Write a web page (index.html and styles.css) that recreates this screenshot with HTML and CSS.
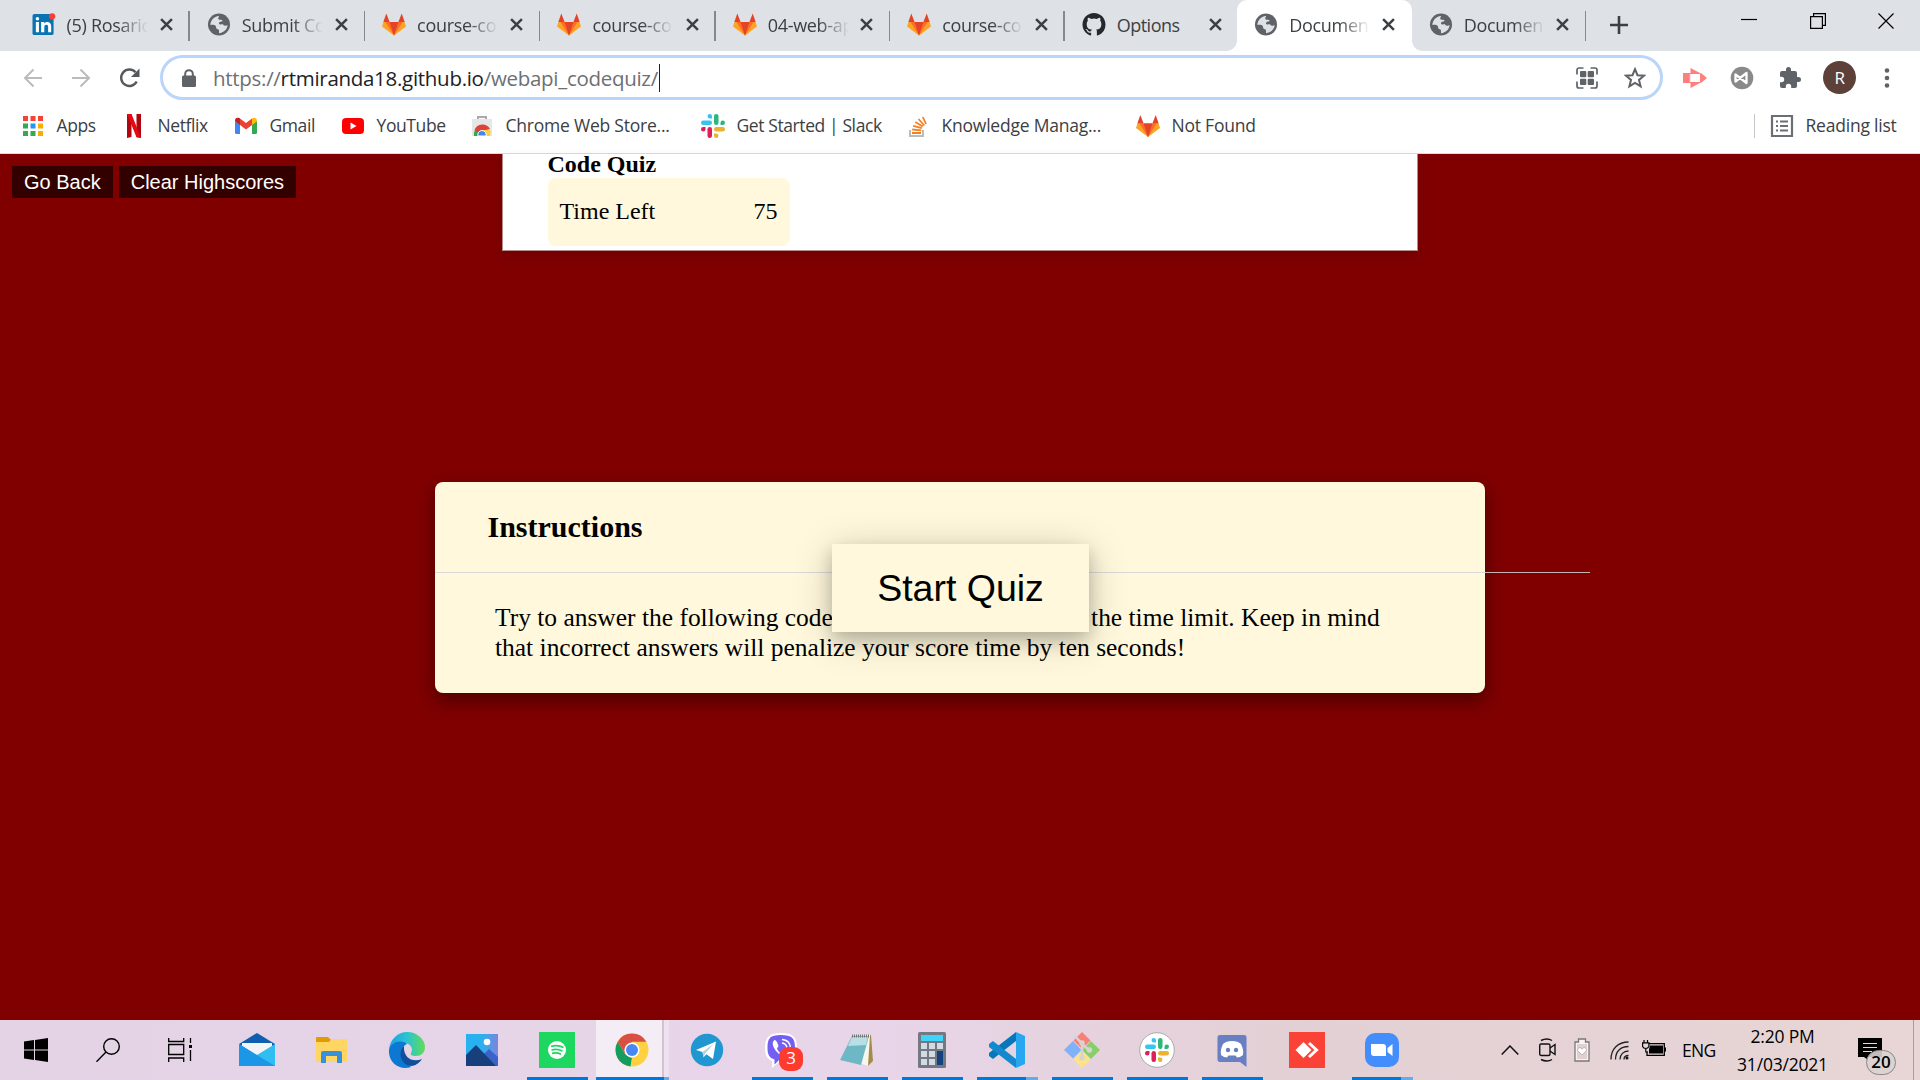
FILE: index.html
```html
<!DOCTYPE html>
<html lang="en">
<head>
<meta charset="utf-8">
<title>Code Quiz</title>
<link rel="stylesheet" href="styles.css">
</head>
<body>
<svg class="defs" aria-hidden="true">
  <symbol id="globe" viewBox="0 0 24 24"><circle cx="12" cy="12" r="11.500" fill="#5f6368"/><path d="M12 3C6.500 3.500 3 8 3 12.500c2-.3 4.500-.2 5.500 1 .9 1 0 2.500 1.500 3.200 1.200.6 2 .4 2 2V21c5-.3 8.700-4 9-8.500-1.300 1.300-3.600 1-4.500-.3-.8-1.200-3 .6-4.200-.8-1.200-1.500.9-2.500 2.400-2.500 1 0 1.300-1 .4-1.500-1.200-.6-3.500.3-3.900-1.300C11 5 12 4.300 12 3z" fill="#dee1e6"/></symbol>
  <symbol id="gitlab" viewBox="0 0 24 22"><path d="M12 22 0 13l1.500-4.500h21L24 13z" fill="#fca326"/><path d="M12 22 3.500 8.500h17z" fill="#fc6d26"/><path d="M12 22 7.600 8.500h8.800z" fill="#e24329"/><path d="M1.300 8.500 4.300 0l3.300 8.500zM16.400 8.500 19.700 0l3 8.500z" fill="#e24329"/></symbol>
  <symbol id="x" viewBox="0 0 12 12"><path d="m1 1 10 10M11 1 1 11" stroke="#3c4043" stroke-width="2.300"/></symbol>
  <symbol id="slack" viewBox="0 0 24 24"><g fill="#36c5f0"><rect x="0" y="6.500" width="11" height="4.500" rx="2.250"/><path d="M11 4.500H8.700A2.250 2.250 0 1 1 11 2.250z"/></g><g fill="#2eb67d"><rect x="13" y="0" width="4.500" height="11" rx="2.250"/><path d="M19.500 11V8.700A2.250 2.250 0 1 1 21.750 11z"/></g><g fill="#ecb22e"><rect x="13" y="13" width="11" height="4.500" rx="2.250"/><path d="M13 19.500h2.300A2.250 2.250 0 1 1 13 21.750z"/></g><g fill="#e01e5a"><rect x="6.500" y="13" width="4.500" height="11" rx="2.250"/><path d="M4.500 13v2.300A2.250 2.250 0 1 1 2.250 13z"/></g></symbol>
</svg>

<header class="browser">
  <div class="tabstrip">
    <div class="tab wide"><svg class="fav" viewBox="0 0 24 24"><rect x="0" y="1" width="22" height="22" rx="2" fill="#0a74b3"/><path d="M3.500 9.500h3.200V20H3.500zM9 9.500h3.200V11c1.500-2.500 7.300-2.300 7.300 2.600V20h-3.200v-5.700c0-2.800-4-2.500-4 .2V20H9z" fill="#fff"/><circle cx="5.100" cy="6" r="1.800" fill="#fff"/><circle cx="20.500" cy="3.500" r="3.300" fill="#f44336"/></svg><span>(5) Rosario</span><svg class="close"><use href="#x"/></svg></div>
    <div class="tab wide"><svg class="fav"><use href="#globe"/></svg><span>Submit Course</span><svg class="close"><use href="#x"/></svg></div>
    <div class="tab wide"><svg class="fav"><use href="#gitlab"/></svg><span>course-content</span><svg class="close"><use href="#x"/></svg></div>
    <div class="tab wide"><svg class="fav"><use href="#gitlab"/></svg><span>course-content</span><svg class="close"><use href="#x"/></svg></div>
    <div class="tab"><svg class="fav"><use href="#gitlab"/></svg><span>04-web-apis</span><svg class="close"><use href="#x"/></svg></div>
    <div class="tab"><svg class="fav"><use href="#gitlab"/></svg><span>course-content</span><svg class="close"><use href="#x"/></svg></div>
    <div class="tab no-line"><svg class="fav" viewBox="0 0 16 16"><path fill="#24292e" d="M8 0C3.580 0 0 3.580 0 8c0 3.540 2.290 6.530 5.470 7.590.4.070.55-.17.55-.38 0-.19-.01-.82-.01-1.490-2.010.37-2.530-.49-2.690-.94-.09-.23-.48-.94-.82-1.130-.28-.15-.68-.52-.01-.53.63-.01 1.080.58 1.230.82.72 1.210 1.870.87 2.330.66.070-.52.28-.87.51-1.070-1.780-.2-3.640-.89-3.640-3.950 0-.87.31-1.590.82-2.150-.08-.2-.36-1.020.08-2.120 0 0 .67-.21 2.200.82a7.600 7.600 0 0 1 4 0c1.530-1.040 2.200-.82 2.200-.82.44 1.100.16 1.920.08 2.120.51.56.82 1.270.82 2.150 0 3.070-1.870 3.750-3.650 3.950.29.25.54.73.54 1.480 0 1.070-.01 1.930-.01 2.200 0 .21.15.46.55.38A8.010 8.010 0 0 0 16 8c0-4.420-3.580-8-8-8z"/></svg><span class="full">Options</span><svg class="close"><use href="#x"/></svg></div>
    <div class="tab active"><svg class="fav"><use href="#globe"/></svg><span>Document</span><svg class="close"><use href="#x"/></svg></div>
    <div class="tab"><svg class="fav"><use href="#globe"/></svg><span>Document</span><svg class="close"><use href="#x"/></svg></div>
    <svg class="newtab" viewBox="0 0 18 18"><path d="M9 0v18M0 9h18" stroke="#3c4043" stroke-width="2.600"/></svg>
    <div class="winctl">
      <svg viewBox="0 0 16 16"><path d="M0 6.500h16" stroke="#000" stroke-width="1.200"/></svg>
      <svg viewBox="0 0 16 16"><path d="M.6 3.600h11.800v11.800H.6zM3.600 3.600v-3h11.800v11.800h-3" fill="none" stroke="#000" stroke-width="1.200"/></svg>
      <svg viewBox="0 0 16 16"><path d="m.5.5 15 15m0-15-15 15" stroke="#000" stroke-width="1.200"/></svg>
    </div>
  </div>

  <div class="toolbar">
    <svg class="nav" viewBox="0 0 20 20"><path d="M19 10H2m8.500-8.500L2 10l8.500 8.500" fill="none" stroke="#b9bbbe" stroke-width="2"/></svg>
    <svg class="nav" viewBox="0 0 20 20"><path d="M1 10h17M9.500 1.500 18 10l-8.500 8.500" fill="none" stroke="#b9bbbe" stroke-width="2"/></svg>
    <svg class="nav" viewBox="0 0 20 20"><path d="M17.200 13.500A8.200 8.200 0 1 1 16 4.300" fill="none" stroke="#55595e" stroke-width="2.400"/><path d="M20 .5V9h-8.500z" fill="#55595e"/></svg>
    <div class="omnibox">
      <svg class="lock" viewBox="0 0 14 18"><path d="M3.200 8V5a3.800 3.800 0 0 1 7.600 0v3" fill="none" stroke="#5f6368" stroke-width="2"/><rect y="6.500" width="14" height="11.500" rx="1.500" fill="#5f6368"/></svg>
      <div class="url">https://<b>rtmiranda18.github.io</b>/webapi_codequiz/</div>
      <i class="caret"></i>
      <svg class="qr" viewBox="0 0 22 22"><path d="M1 7.500V3a2 2 0 0 1 2-2h4.500M14.500 1H19a2 2 0 0 1 2 2v4.500M21 14.500V19a2 2 0 0 1-2 2h-4.500M7.500 21H3a2 2 0 0 1-2-2v-4.500" fill="none" stroke="#5f6368" stroke-width="1.700"/><g fill="#5f6368"><rect x="4" y="4" width="6.300" height="6.300" rx="1"/><rect x="11.700" y="4" width="6.300" height="6.300" rx="1"/><rect x="4" y="11.700" width="6.300" height="6.300" rx="1"/><rect x="11.700" y="11.700" width="6.300" height="6.300" rx="1"/></g></svg>
      <svg class="star" viewBox="0 0 22 22"><path d="m11 2.200 2.500 6 6.500.5-5 4.200 1.600 6.400L11 15.900l-5.600 3.400L7 12.900 2 8.700l6.500-.5z" fill="none" stroke="#5f6368" stroke-width="2"/></svg>
    </div>
    <div class="exts">
      <svg viewBox="0 0 24 24"><path d="M0 7h6v10H0zM7.500 2l9.500 5H7.500zM18 7l6 5-6 5v-3.500h-1v-3h1zM7.500 22v-5H17z" fill="#ff7f7c"/><path d="M6.700 7v10M6 7.500h11.500V11M6 16.500h11.500V13" fill="none" stroke="#ff7f7c"/></svg>
      <svg viewBox="0 0 24 24"><circle cx="12" cy="12" r="11.300" fill="#8a8a8a"/><path d="M5.500 8.500v7L16.500 7v10z" fill="none" stroke="#fff" stroke-width="2.300" stroke-linejoin="round"/></svg>
      <svg viewBox="0 0 24 24"><path d="M20.500 11H19V7a2 2 0 0 0-2-2h-4V3.500a2.500 2.500 0 0 0-5 0V5H4a2 2 0 0 0-2 2v3.800h1.500a2.700 2.700 0 0 1 0 5.400H2V20a2 2 0 0 0 2 2h3.800v-1.500a2.700 2.700 0 0 1 5.400 0V22H17a2 2 0 0 0 2-2v-4h1.500a2.500 2.500 0 0 0 0-5z" fill="#5f6368"/></svg>
      <div class="avatar">R</div>
      <svg viewBox="0 0 24 24"><g fill="#5f6368"><circle cx="12" cy="4.500" r="2.300"/><circle cx="12" cy="12" r="2.300"/><circle cx="12" cy="19.500" r="2.300"/></g></svg>
    </div>
  </div>

  <nav class="bookmarks">
    <a><svg viewBox="0 0 24 24"><path d="M2 2h5v5H2zM9.500 2h5v5h-5zM17 2h5v5h-5z" fill="#f44336"/><path d="M2 9.500h5v5H2zM2 17h5v5H2zM9.500 17h5v5h-5z" fill="#34a853"/><path d="M9.500 9.500h5v5h-5z" fill="#2196f3"/><path d="M17 9.500h5v5h-5zM17 17h5v5h-5z" fill="#fbac04"/></svg><span>Apps</span></a>
    <a><svg viewBox="0 0 24 24"><path d="M5 0h4.500v23L5 24zM14.500 0H19v24l-4.500-1z" fill="#b1060f"/><path d="M5 0h4.500L19 24l-4.500-.8z" fill="#e50914"/></svg><span>Netflix</span></a>
    <a><svg viewBox="0 0 24 24"><path d="M1 7l5 3.500V20H2.500A1.500 1.500 0 0 1 1 18.500z" fill="#4285f4"/><path d="M23 7l-5 3.500V20h3.500a1.500 1.500 0 0 0 1.500-1.500z" fill="#34a853"/><path d="M1 7c0-3 3-4 5-2.500L12 9l6-4.500V11l-6 4.500L6 11z" fill="#ea4335"/><path d="M18 11V4.500C20 3 23 4 23 7z" fill="#fbbc04"/><path d="M1 7c0-3 3-4 5-2.500V11z" fill="#c5221f"/></svg><span>Gmail</span></a>
    <a><svg viewBox="0 0 24 24"><rect x="1" y="4" width="22" height="16" rx="4" fill="#f00"/><path d="m9.500 8.500 6 3.500-6 3.500z" fill="#fff"/></svg><span>YouTube</span></a>
    <a><svg viewBox="0 0 24 24"><path d="M8 5V3h8v2" fill="none" stroke="#aaa" stroke-width="2"/><path d="M2 5h20v17H2z" fill="#e6e6e6"/><path d="M4 22a8 9 0 0 1 4-9l4 9z" fill="#34a853"/><path d="M4.500 16a8.500 8.500 0 0 1 15.500-1l-8 2-4 1z" fill="#db4437"/><path d="M12 16h8.200c.5 2 .3 4-.2 6h-8z" fill="#ffcd40"/><path d="M8 22a4.200 4.200 0 1 1 8 0z" fill="#4285f4" stroke="#fff"/></svg><span class="fit">Chrome Web Store...</span></a>
    <a><svg><use href="#slack"/></svg><span>Get Started | Slack</span></a>
    <a><svg viewBox="0 0 24 24"><path d="M4 16v6h13v-6" fill="none" stroke="#bcbbbb" stroke-width="2"/><path d="M6 19h9M6.200 15.500l9 .9M7.200 11.800l8.600 2.400M9.300 8l7.500 4.600M12.500 5l5.800 6.500M16.800 3l3.200 7" stroke="#f48024" stroke-width="1.800"/></svg><span class="fit">Knowledge Manag...</span></a>
    <a><svg><use href="#gitlab"/></svg><span class="fit">Not Found</span></a>
    <a class="reading"><svg viewBox="0 0 24 24"><path d="M2 2h20v20H2z" fill="none" stroke="#6b6e72" stroke-width="2.200"/><path d="M6 7.500h2m2 0h8M6 12h2m2 0h8m-12 4.500h2m2 0h8" stroke="#6b6e72" stroke-width="2"/></svg><span class="fit">Reading list</span></a>
  </nav>
</header>

<main class="page">
  <div class="top">
    <div class="actions"><button>Go Back</button><button>Clear Highscores</button></div>
    <section class="scorebar">
      <h1>Code Quiz</h1>
      <div class="timer"><span>Time Left</span><span>75</span></div>
    </section>
  </div>
  <section class="card">
    <h2>Instructions</h2>
    <div class="rule"></div>
    <p>Try to answer the following code-related questions within the time limit. Keep in mind<br>that incorrect answers will penalize your score time by ten seconds!</p>
    <button class="start">Start Quiz</button>
  </section>
</main>

<footer class="taskbar">
  <div class="system">
    <svg viewBox="0 0 24 24"><path d="m0 3.500 10-1.400v9.400H0zM11 2l13-2v11.500H11zM0 12.500h10v9.400l-10-1.400zM11 12.500h13V24l-13-2z"/></svg>
    <svg viewBox="0 0 24 24" fill="none" stroke="#000" stroke-width="1.400"><circle cx="15.500" cy="8.500" r="7.800"/><path d="M10 14 .5 23.800"/></svg>
    <svg viewBox="0 0 24 24" fill="none" stroke="#000" stroke-width="1.300"><path d="M.7 0v3.500h15V0M.7 6.500h15v10H.7zM.7 24v-4h15v4M22.500 0v5M22.500 12v11"/><path d="M21 7h3v3h-3z" fill="#000" stroke="none"/></svg>
  </div>
  <div class="apps">
    <div><svg viewBox="0 0 36 36"><path d="M0 12 18 1l18 11v5H0z" fill="#0f5fae"/><path d="M3 11h30v9L18 25 3 20z" fill="#f4f4f4"/><path d="M0 12v22h36V12L18 23z" fill="#30bdf2"/><path d="m0 12 36 22H0z" fill="#1b97e5"/></svg></div>
    <div><svg viewBox="0 0 36 36"><path d="M2 6q0-1 1-1h11l3 3-3 3H2z" fill="#e29c00"/><path d="M2 10h13l3-3h15v22q0 1-1 1H3q-1 0-1-1z" fill="#ffd563"/><path d="M7 31V21q0-2 2-2h17q2 0 2 2v10h-5v-7H12v7z" fill="#3790db"/></svg></div>
    <div><svg viewBox="0 0 36 36"><defs><linearGradient id="eg"><stop stop-color="#1c9fe0"/><stop offset=".5" stop-color="#2cc3d2"/><stop offset="1" stop-color="#62db55"/></linearGradient></defs><path d="M0 18C1 7 9 0 18 0c11 0 18 8 18 15 0 6-4 9-9 9-4 0-6-1-5-3 3-5-1-10-8-10C7 11 2 14 0 18z" fill="url(#eg)"/><path d="M0 18C2 10 12 7 18 12c-6 2-7 12 0 18l4 5C10 39-1 30 0 18z" fill="#0c78d4"/><path d="M15 14c-7 6-3 20 8 20 5-1 8-4 10-7-9 4-19-1-18-13z" fill="#114f9b"/></svg></div>
    <div><svg viewBox="0 0 36 36"><defs><linearGradient id="ph"><stop offset=".5" stop-color="#29b0ee"/><stop offset="1" stop-color="#7e83dc"/></linearGradient></defs><path d="M2 2h32v32H2z" fill="url(#ph)"/><path d="m17 25 8-8 9 8v9H18z" fill="#3b62c9"/><path d="M2 23 12 13l20 21H2z" fill="#173f7c"/><circle cx="23" cy="10" r="3.300" fill="#fff"/></svg></div>
    <div class="open"><svg viewBox="0 0 36 36"><path d="M0 0h36v36H0z" fill="#1ed760"/><circle cx="18" cy="18" r="9" fill="#fff"/><path d="M12 14.500q6.500-2 12.500 1M12.500 18q5.500-1.500 11 1M13 21.300q5-1 9 1" fill="none" stroke="#1ed760" stroke-width="1.700"/></svg></div>
    <div class="open current multi"><svg viewBox="0 0 36 36"><circle cx="18" cy="18" r="16.500" fill="#ffd140"/><path d="M3.700 9.800A16.500 16.500 0 0 1 32.300 9.800H18l-7 12z" fill="#d94f43"/><path d="M3.700 9.800 11 22l7 4.200-1.500 8.300A16.500 16.500 0 0 1 3.700 9.800z" fill="#179c5f"/><path d="m16.700 34.500 8.400-12.300-7 3.500z" fill="#ffd140"/><circle cx="18" cy="18" r="7.600" fill="#fff"/><circle cx="18" cy="18" r="6" fill="#4788f4"/></svg></div>
    <div><svg viewBox="0 0 36 36"><circle cx="18" cy="18" r="16.200" fill="#2197d1"/><path d="m7 18 20-8.500L24 27l-6.500-4.700-3 3L13.500 20z" fill="#fff"/><path d="m13.500 20 11-8-8.500 9.500-1.500 4z" fill="#b5cfe1"/></svg></div>
    <div class="open"><svg viewBox="0 0 36 36"><path d="M17 1C5 1 1 5 1 16c0 7 2 11 7 13v7l7-6c14 0 18-3 18-14S29 1 17 1z" fill="#fff"/><path d="M17 3C6 3 3.500 6 3.500 16c0 7 2 10 7 11.500v5l5-5C27 28 31 26 31 16S28 3 17 3z" fill="#7360f2"/><path d="M10.500 8c-3 2-2 7 2.500 12s8 6 9.500 3.500c.5-1-2.500-3.500-3.500-3.500l-2 1.200c-2-1-3.500-3-4-5l1.500-2c0-1.500-2.500-6.700-4-6.200z" fill="#fff"/><path d="M18 7.500q8 .5 8.500 8.500M18 11q4.500.5 5 5" fill="none" stroke="#fff" stroke-width="1.400"/></svg><em>3</em></div>
    <div class="open"><svg viewBox="0 0 36 36"><path d="m13 4 19-1 2 26-5 5z" fill="#a58b4b"/><path d="m13 4 18-1-2 31-8-3z" fill="#f7f7ee"/><path d="M13 4h17l-8 29-21-5z" fill="#6eb8c6"/><path d="M13 5h16l-2 8-18 1z" fill="#b8dfe3"/><path d="M13 4h18" stroke="#777" stroke-width="3" stroke-dasharray="1 1"/></svg></div>
    <div class="open"><svg viewBox="0 0 36 36"><rect x="4" width="28" height="36" rx="1.500" fill="#737982"/><path d="M7 3h22v6H7z" fill="#3fd3fa"/><path d="M7 11h6v6H7zm8 0h6v6h-6zm8 0h6v6h-6zM7 19h6v6H7zm8 0h6v6h-6zM7 27h6v6H7zm8 0h6v6h-6z" fill="#d3dae3"/><path d="M23 19h6v14h-6z" fill="#12427f"/></svg></div>
    <div class="open multi"><svg viewBox="0 0 36 36"><path d="m27 9-23 18-4-3v-3L27 0z" fill="#0876bb"/><path d="M27 27 4 9l-4 3v3l27 21z" fill="#1389ce"/><path d="m27 0 9 4v28l-9 4z" fill="#27a7f0"/></svg></div>
    <div class="open"><svg viewBox="0 0 36 36"><path d="m18 0 8.500 8.500L18 17 9.500 8.500z" fill="#f88078"/><path d="m9 9 8.500 9L9 26.500 0 18z" fill="#80b2fa"/><path d="m27 9 9 9-9 9-9-9z" fill="#87d068"/><path d="m18 19 8.500 8.500L18 36l-8.500-8.500z" fill="#ffe283"/><path d="m11 4 7 8v14M18 12l7 6" stroke="#d8d3d3" stroke-width="2.500" fill="none"/><g fill="#d8d3d3"><circle cx="18" cy="11" r="2.700"/><circle cx="18" cy="26" r="2.700"/><circle cx="25.500" cy="18" r="2.700"/></g></svg></div>
    <div class="open"><svg viewBox="0 0 36 36"><circle cx="18" cy="18" r="17.300" fill="#fff" stroke="#aaa"/><use href="#slack" x="6" y="6" width="24" height="24"/></svg></div>
    <div class="open"><svg viewBox="0 0 36 36"><path d="M6 3h24q2.500 0 2.500 2.500V35L26 30H6q-2.500 0-2.500-2.500v-22Q3.500 3 6 3z" fill="#687fc4"/><path d="M12 10q6-2 12 0l3 2q3 6 2 11-3 2.500-6 2.500l-1.500-2h-7l-1.500 2q-3 0-6-2.500-1-5 2-11z" fill="#fff"/><circle cx="14" cy="18" r="2.200" fill="#687fc4"/><circle cx="22" cy="18" r="2.200" fill="#687fc4"/></svg></div>
    <div><svg viewBox="0 0 36 36"><path d="M0 0h36v36H0z" fill="#fb4237"/><path d="m14.500 10 8 8-8 8-8-8z" fill="#fff"/><path d="m20 11 7.500 7-7.500 7" fill="none" stroke="#fff" stroke-width="3"/></svg></div>
    <div class="open multi"><svg viewBox="0 0 36 36"><rect x="1" y="1" width="34" height="34" rx="10" fill="#448dfc"/><path d="M7 12h12q3 0 3 3v9H10q-3 0-3-3zM23.500 16l5-4v12l-5-4z" fill="#fff"/></svg></div>
  </div>
  <div class="tray">
    <svg class="t-up" viewBox="0 0 18 10"><path d="m.7 9.500 8.300-8.500 8.300 8.500" fill="none" stroke="#111" stroke-width="1.500"/></svg>
    <svg class="t-cam" viewBox="0 0 17 24" fill="none" stroke="#111" stroke-width="1.400"><path d="M2 2.500q6-3 11 0M2 21.500q6 3 11 0M11 10l5-3.500v10L11 13"/><rect x=".7" y="6" width="10.300" height="11.500" rx="1.500"/></svg>
    <svg class="t-heart" viewBox="0 0 16 24"><path d="M1 4h3.500V1h7v3H15v19H1z" fill="#f9f2f2" stroke="#777" stroke-width="1.300"/><path d="M3 6h10v15H3z" fill="#e3cfd0"/><path d="m8 17-4.500-4.500c0-3.500 3.500-3.500 4.500-1.300 1-2.200 4.500-2.200 4.500 1.300z" fill="#fff" stroke="#999" stroke-width=".6"/></svg>
    <svg class="t-wifi" viewBox="0 0 19 19" fill="none" stroke="#222" stroke-width="1.300"><path d="M1 18.500C1 8 8 1 18.500 1M5.500 18.500c0-8 5-13 13-13M10 18.500c0-5 3.500-8.500 8.500-8.500M14 18.500q0-4 4.500-4"/><circle cx="17" cy="17" r="1.500" fill="#111" stroke="none"/></svg>
    <svg class="t-bat" viewBox="0 0 24 17"><path d="M6 3.700h16.300v11.600H5V11" fill="none" stroke="#000" stroke-width="1.300"/><path d="M8 5.500h13v8H7v-4zM22.500 7.500H24v4h-1.500z"/><path d="M.6 2.800h6.300v3.700q-1 2-3.200 2T.6 6.500zM2 0v3M5.500 0v3M3.800 8.500V12H6" fill="#e6d5d6" stroke="#000" stroke-width="1.200"/></svg>
    <span class="lang">ENG</span>
    <div class="clock"><span>2:20 PM</span><span>31/03/2021</span></div>
    <div class="notif"><svg viewBox="0 0 24 22"><path d="M0 0h24v19H10v3l-4-3H0z"/><path d="M5 5.500h14M5 9.500h14M5 13.500h9" stroke="#e8d8d8" stroke-width="1.200"/></svg><em>20</em></div>
    <i class="peek"></i>
  </div>
</footer>
</body>
</html>
```
FILE: styles.css
```css
* { box-sizing: border-box; }
body {
  margin: 0; width: 1920px; height: 1080px; overflow: hidden;
  display: flex; flex-direction: column;
  font-family: "Open Sans", "Noto Sans", sans-serif; color: #3c4043;
}
svg { display: block; flex: none; }
.defs { display: none; }
button { border: 0; padding: 0; font-family: "Liberation Sans", Arial, sans-serif; }

/* browser chrome */
.browser { height: 154px; background: #fff; border-bottom: 1px solid #dadce0; }
.tabstrip { display: flex; align-items: center; height: 51px; padding-left: 14.500px; background: #dee1e6; }
.tab { position: relative; display: flex; align-items: center; flex: none; width: 174.500px; height: 51px; padding: 0 17px 2px 17px; }
.tab.wide { width: 175.300px; }
.tab.no-line { width: 172.500px; padding-right: 15px; }
.tab::after { content: ""; position: absolute; right: 0; top: 11px; width: 1.500px; height: 30px; background: #85888d; }
.tab.no-line::after, .tab.active::after { display: none; }
.fav { width: 24px; height: 23px; margin-right: 11px; }
.tab span {
  width: 81px; font-size: 18px; letter-spacing: -.3px; white-space: nowrap; overflow: hidden;
  -webkit-mask-image: linear-gradient(90deg, #000 62%, transparent 100%);
}
.tab span.full { -webkit-mask-image: none; letter-spacing: -.5px; }
.close { width: 13px; height: 13px; margin-left: auto; }
.tab.active { background: #fff; border-radius: 10px 10px 0 0; }
.tab.active::before {
  content: ""; position: absolute; left: -10px; right: -10px; bottom: 0; height: 10px;
  background:
    radial-gradient(circle at 0 0, transparent 9.500px, #fff 10px) left / 10px 10px no-repeat,
    radial-gradient(circle at 100% 0, transparent 9.500px, #fff 10px) right / 10px 10px no-repeat;
}
.newtab { width: 18px; height: 18px; margin: 0 0 2px 24px; }
.winctl { display: flex; gap: 52.500px; margin: 0 26px 9px auto; }
.winctl svg { width: 16px; height: 16px; }

.toolbar { display: flex; align-items: center; height: 53px; padding: 0 21px 0 23px; }
.nav { width: 20px; height: 20px; margin-right: 28px; }
.nav:nth-of-type(3) { width: 21px; margin-right: 20px; }
.omnibox { display: flex; align-items: center; flex: none; width: 1503px; height: 45px; padding: 0 14px 0 19px; border: 3px solid #b9d5fb; border-radius: 23px; }
.lock { width: 14px; height: 18px; margin-right: 17px; }
.url { width: 446px; font-size: 20.500px; letter-spacing: -.29px; white-space: nowrap; color: #6d7074; }
.url b { font-weight: 400; color: #202124; }
.caret { width: 1px; height: 28px; background: #222; }
.qr { width: 22px; height: 22px; margin-left: auto; }
.star { width: 22px; height: 22px; margin-left: 26px; }
.exts { display: flex; align-items: center; justify-content: space-between; flex: 1; margin: 0 0 0 20px; }
.exts svg { width: 24px; height: 24px; }
.exts svg:nth-child(3) { margin-left: 1px; }
.avatar { width: 33px; height: 33px; margin: 0 -1px 0 -1px; border-radius: 50%; background: #5d4037; color: #fff; font-size: 17px; line-height: 33px; text-align: center; }
.exts svg:last-child { margin: 0 0 0 -3px; }

.bookmarks {
  display: grid; grid-template-columns: 101px 112px 107px 129px 231px 205px 230px 618px auto;
  align-items: center; height: 43px; padding-left: 21px;
}
.bookmarks a { display: flex; align-items: center; gap: 12px; height: 24px; }
.bookmarks svg { width: 24px; height: 24px; }
.bookmarks span { margin: -2px 0 0 -.5px; font-size: 17.500px; letter-spacing: -.4px; white-space: nowrap; }
.bookmarks span.fit { letter-spacing: -.22px; }
.bookmarks .reading { padding-left: 15px; border-left: 1px solid #c4c7cb; }

/* quiz page */
.page { height: 866px; background: #800000; font-family: "Liberation Serif", "Times New Roman", serif; color: #000; }
.top { display: flex; height: 97px; }
.actions { display: flex; gap: 6px; width: 502px; padding: 12px 0 0 12px; }
.actions button { height: 32px; padding: 0 12px; background: #330000; color: #fff; font-size: 20px; }
.scorebar { width: 916px; height: 97px; padding-left: 44.500px; background: #fff; border: 1px solid #b58d8d; border-top: 0; box-shadow: 0 5px 12px rgba(0,0,0,.12); }
.scorebar h1 { margin: 0; height: 23.500px; font-size: 24px; line-height: 20px; }
.timer { display: flex; justify-content: space-between; align-items: center; width: 242px; height: 68px; padding: 0 12px; border-radius: 8px; background: #fff8dc; font-size: 24px; }
.card { position: relative; width: 1050px; height: 211px; margin: 231px auto 0; background: #fff8dc; border-radius: 8px; box-shadow: 0 10px 20px rgba(0,0,0,.22), 0 5px 18px rgba(0,0,0,.24); }
.card h2 { margin: 0; height: 90px; padding: 28px 52.500px 0; font-size: 30px; line-height: 34px; }
.rule { width: 1155px; height: 1px; background: rgba(211,211,211,.85); }
.card p { margin: 0; padding: 29.500px 0 0 60px; font-size: 25.480px; line-height: 30px; white-space: nowrap; }
.start { position: absolute; left: 397px; top: 62px; width: 257px; height: 88px; background: #fff8dc; color: #000; font-size: 37.500px; box-shadow: 0 8px 16px rgba(0,0,0,.2), 0 6px 40px rgba(0,0,0,.19); }

/* taskbar */
.taskbar { display: flex; height: 60px; background: linear-gradient(90deg, #e3d3e5, #e8d5e9 45%, #e3d0d4 68%, #e8d6d6); color: #000; }
.system { display: flex; align-items: center; gap: 48px; width: 219.500px; padding-left: 24px; }
.system svg { width: 24px; height: 24px; }
.apps { display: flex; }
.apps div { position: relative; display: flex; justify-content: center; align-items: center; width: 75px; height: 60px; }
.apps svg { width: 36px; height: 36px; }
.apps .open::after { content: ""; position: absolute; left: 7px; bottom: 0; width: 61px; height: 3px; background: #0078d7; }
.apps .multi::after { background: linear-gradient(90deg, #0078d7 49px, #65abe5 49px); }
.apps .current { background: linear-gradient(90deg, transparent 1px, #f4edf5 1px 67px, #d2c2d3 67px 69px, #efe1f0 69px 74px, transparent 74px); }
.apps .current::after { left: 1px; width: 73px; background: linear-gradient(90deg, #0078d7 68px, #65abe5 68px); }
.apps em { position: absolute; left: 34.500px; top: 27px; width: 24px; height: 24px; border-radius: 9px; background: #ff3b30; color: #fff; font: 17px/22px "Open Sans", sans-serif; text-align: center; }
.tray { display: flex; align-items: center; flex: 1; padding-left: 81.500px; font-size: 17.500px; }
.t-up { width: 18px; height: 10px; margin-right: 20px; }
.t-cam { width: 17px; height: 24px; margin-right: 18px; }
.t-heart { width: 16px; height: 24px; margin-right: 20px; }
.t-wifi { width: 19px; height: 19px; margin-right: 13px; }
.t-bat { width: 24px; height: 17px; margin: 0 16px 3px 0; }
.lang { width: 54px; letter-spacing: -.7px; }
.clock { display: flex; flex-direction: column; align-items: center; width: 93px; line-height: 28px; letter-spacing: -.2px; white-space: nowrap; }
.notif { position: relative; margin: 0 0 0 29px; }
.notif svg { width: 24px; height: 22px; margin-top: -3px; }
.notif em { position: absolute; left: 8px; top: 9px; width: 30px; height: 25px; border: 1px solid #8b8585; border-radius: 13px; background: rgba(218,210,210,.9); font: 600 17px/22px "Open Sans", sans-serif; text-align: center; }
.peek { width: 1px; height: 60px; margin: 0 6px 0 auto; background: #a99c9d; }
```
